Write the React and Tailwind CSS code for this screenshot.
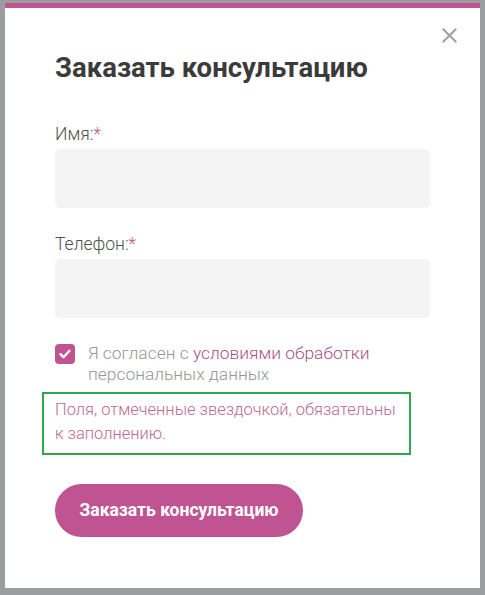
import { useState } from 'react'

const font = { fontFamily: 'Roboto, "Liberation Sans", sans-serif' }

function Field({ label }) {
  return (
    <div>
      <label className="block text-[17.5px] leading-[20px] font-light text-[#505050]">
        {label}<span className="text-[#c05493]">*</span>
      </label>
      <input type="text" className="mt-[5px] block h-[59px] w-[375px] rounded-[5px] bg-[#f4f4f4] outline-none" />
    </div>
  )
}

export default function App() {
  const [agree, setAgree] = useState(true)

  return (
    <div className="min-h-[595px] bg-[#9b9ea1] pt-[3px] pr-[5px] pb-[7px] pl-[5px]" style={font}>
      <div className="relative h-[585px] bg-white">
        <div className="h-[5px] bg-[#c05493]" />

        {/* close */}
        <button className="absolute top-[25px] right-[23px] h-[15px] w-[15px] text-[#a3a3a3]">
          <svg viewBox="0 0 15 15" className="h-[15px] w-[15px]" stroke="currentColor" strokeWidth="2.2" strokeLinecap="square">
            <path d="M1.5 1.5l12 12M13.5 1.5l-12 12" />
          </svg>
        </button>

        <div className="pt-[43px] pl-[50px]">
          <h2 className="text-[27.5px] leading-[34px] font-bold text-[#3b3b3b]">Заказать консультацию</h2>

          <div className="mt-[39px]">
            <Field label="Имя:" />
          </div>
          <div className="mt-[26px]">
            <Field label="Телефон:" />
          </div>

          <label className="mt-[26px] flex items-start gap-[13px]">
            <span
              onClick={() => setAgree(!agree)}
              className="flex h-[20px] w-[20px] shrink-0 items-center justify-center rounded-[4px] bg-[#c05493]"
            >
              {agree && (
                <svg viewBox="0 0 20 20" className="h-[20px] w-[20px]" fill="none" stroke="white" strokeWidth="2.4" strokeLinecap="round" strokeLinejoin="round">
                  <path d="M5.5 10.2l3 3 6-6.4" />
                </svg>
              )}
            </span>
            <span className="-mt-[1px] text-[17.4px] leading-[21px] font-light text-[#969696]">
              Я согласен с <span className="text-[#a9527f]">условиями обработки</span><br />
              персональных данных
            </span>
          </label>

          <div className="mt-[7px] -ml-[13px] w-[369px] border-2 border-[#2fa74f] pt-[4px] pb-[7px] pl-[11px]">
            <p className="text-[16.5px] leading-[24px] font-light text-[#bd6990]">
              Поля, отмеченные звездочкой, обязательны<br />к заполнению.
            </p>
          </div>

          <button className="mt-[29px] h-[53px] w-[248px] rounded-full bg-[#c05493] text-[17.5px] font-bold text-white">
            Заказать консультацию
          </button>
        </div>
      </div>
    </div>
  )
}
